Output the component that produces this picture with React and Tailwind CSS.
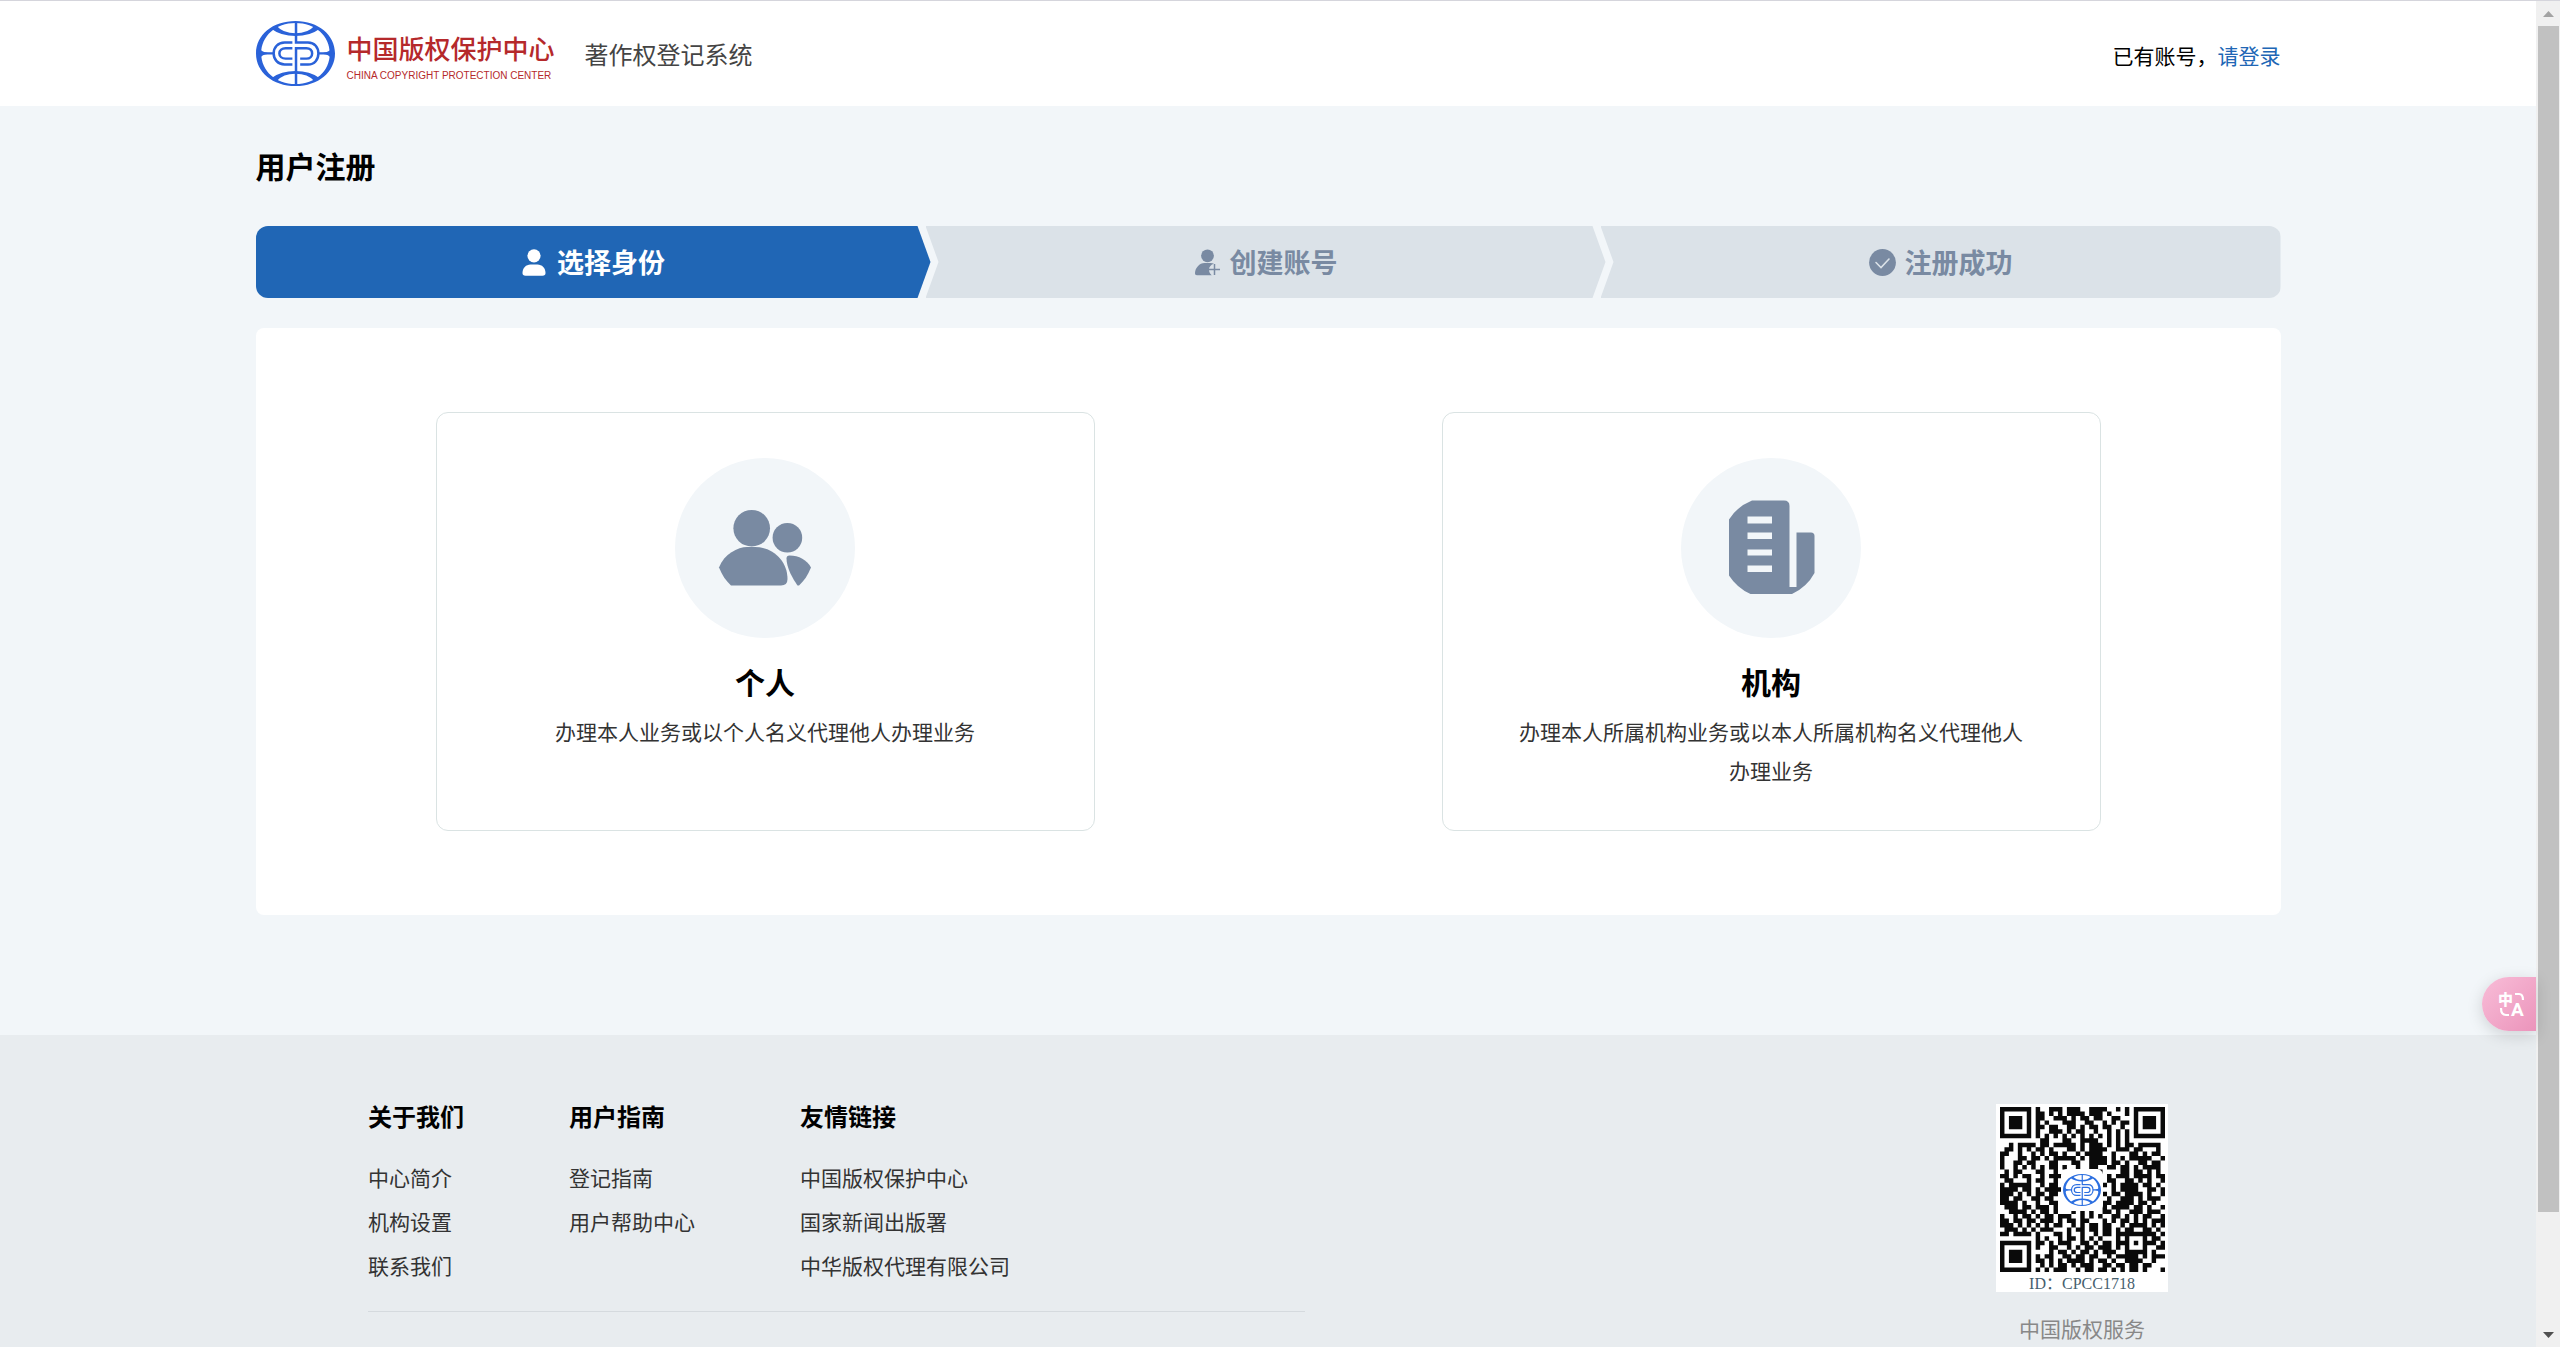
import React from "react";

const QR_ROWS = [
  "#######.#..###.###..####..#.#.#######",
  "#.....#.##.#.#.####.###.#...#.#.....#",
  "#.###.#.##..###.#.##.##..##...#.###.#",
  "#.###.#.#.#...###..##..#.#.##.#.###.#",
  "#.###.#.##.##..##.#.##.##..#..#.###.#",
  "#.....#.#..###.#.##..#..#.#.#.#.....#",
  "#######.#.#.#.#.#.#.#.#.#.#.#.#######",
  ".........##...##..####..#.#.#........",
  "..#.####.##.#####.#.###.#.#.##.#####.",
  ".##.#.#.##.#...##.#.####..###.##...#.",
  "##..#..#.#.##.#..#.####..#...##.#.##.",
  "#...##.##.#.#####.#.####.#.#.#####..#",
  "#..##.##...##...##..####.##.#..##.##.",
  "#..#.#.#.#.##.#..#..##..##.##.#.####.",
  ".#.##...##..#..#......#....##.##.#.#.",
  "##.#.##..#.###..........#.###.####.##",
  ".##...#.##..#...........##..##.#.#..#",
  "#.#####..#.##..........#.#.####.##.#.",
  "####.##.#.####...........#.####..##.#",
  "###.#.#.##.##..........#.##.####.#..#",
  "##.##..##.##............#..###.#.###.",
  "####.#..#..##..........##.####.##.#..",
  ".###.##.###.#..........#.####.##.#..#",
  "..####.#.##.#...#.#.#..##.#..###.###.",
  "#..#.##.#.##.###..#.#.#..##.#.#.##..#",
  "##.##.##.###.#.##.##...#.#.##.#.#.###",
  "###.#.#.#.#.##..#.#.##.##..#.####.#.#",
  ".###.#.#.###...#.##.##.##.#.##..##.#.",
  "##.####.#...##.#..#..#.##.#########.#",
  "........#.#..#.##.#.#.#...#.#...#.##.",
  "#######.##.#.###..##.#.##.###.#.###.#",
  "#.....#.#..##..#.#.##.###.#.#...#..##",
  "#.###.#....#.##.#.##.#.###..#####.#..",
  "#.###.#.#.##..##.##.##..#.#####.#.###",
  "#.###.#.##.#.#.####.#.##.#..####..#..",
  "#.....#..#.#.##.#.###..##.##.##.##...",
  "#######.#.#.###..#.##.##.#.#.##.#...#",
];

const QR_PATH = QR_ROWS.map((row, y) =>
  [...row].map((cell, x) => (cell === "#" ? `M${x} ${y}h1v1h-1z` : "")).join("")
).join("");

function Emblem({ className, color = "#2a62d9" }) {
  return (
    <svg viewBox="0 0 76 65" preserveAspectRatio="none" className={className} fill="none" stroke={color} strokeWidth="2.4" aria-hidden="true">
      <path
        fill={color}
        stroke="none"
        fillRule="evenodd"
        d="M38 0C60 0 76 14 76 32.4S60 65 38 65 0 51 0 32.4 16 0 38 0ZM38 2C19 2 5 15 5 32.4S19 63 38 63 71 50 71 32.4 57 2 38 2Z"
      />
      <path fill={color} stroke="none" d="M15 8Q24 15 38 15T61 8L56 5Q50 12.3 38 12.3T20 5ZM15 57Q24 50 38 50T61 57L56 60Q50 52.7 38 52.7T20 60Z" />
      <path d="M38.5 1V21.5H50C56.5 21.5 60 26.5 60 32.4S56.5 43.5 50 43.5H42.5" />
      <path d="M38.5 64V27.2H48.5C52 27.2 54 29.5 54 32.4S52 37.6 48.5 37.6H42.5" />
      <path d="M35 21.5H27.5C21 21.5 17 26.5 17 32.4S21 43.5 27.5 43.5H35" />
      <path d="M35 27.2H28.5C25 27.2 22.5 29.5 22.5 32.4S25 37.6 28.5 37.6H35" />
      <path d="M3 32.4H17M60 32.4H73" />
      <path fill={color} stroke="none" d="M4 28Q6 31.3 11 31.8V33Q6 33.5 4 37ZM72 28Q70 31.3 65 31.8V33Q70 33.5 72 37Z" />
    </svg>
  );
}

function UserIcon() {
  return (
    <svg viewBox="0 0 27 27" className="size-[27px]" fill="currentColor" aria-hidden="true">
      <circle cx="13" cy="6.8" r="6.6" />
      <path d="M1.5 24C1.5 19 5 15.5 9.5 15.5h7c4.500 0 8 3.500 8 8.500 0 2-1 2.700-3 2.700H4.500c-2 0-3-.7-3-2.700Z" />
    </svg>
  );
}

function UserAddIcon() {
  return (
    <svg viewBox="0 0 27 27" className="size-[27px]" fill="currentColor" aria-hidden="true">
      <circle cx="13.5" cy="6.8" r="6.4" />
      <path d="M1 24C1 19 5.5 14 10.5 14h6c1.300 0 2.500.3 3.500.8-3 .8-5 3-5 5.700 0 2.400 1 4.300 2.700 5.700H3C1.600 26.200 1 25.500 1 24Z" />
      <path d="M20.5 15v11M15 20.5h11" stroke="currentColor" strokeWidth="1.5" />
    </svg>
  );
}

function CheckIcon() {
  return (
    <svg viewBox="0 0 27 27" className="size-[27px]" aria-hidden="true">
      <circle cx="13.5" cy="13.5" r="13.4" fill="currentColor" />
      <path d="m7 13.5 5 5 8-8.5" fill="none" stroke="#dbe2e8" strokeWidth="1.6" strokeLinecap="round" />
    </svg>
  );
}

function PeopleIcon() {
  return (
    <svg viewBox="0 0 96 96" className="size-24" fill="currentColor" aria-hidden="true">
      <circle cx="34.7" cy="28.2" r="18.3" />
      <circle cx="70.4" cy="37.8" r="14.8" />
      <path d="M2 67.5C7 54 21 47 30 47H38C56 47 70.5 61 70.5 79Q70.5 85.5 64 85.5H14C9 81 5 75 2 67.5Z" />
      <path d="M72.5 55.5C82 55.5 90 60 94 67.5C91 75 87 81 82 85.5H80.5C76 79 69.5 68 69.5 58.5Q69.5 55.5 72.5 55.5Z" />
    </svg>
  );
}

function BuildingIcon() {
  return (
    <svg viewBox="0 0 96 96" className="size-24" fill="currentColor" aria-hidden="true">
      <path
        fillRule="evenodd"
        d="M29 .5H61Q66.5 .5 66.5 6V87H73.5V32.5H88Q91.5 32.5 91.5 36V73Q84 87 69 94H27.5Q14 88 6 75.5V19.5Q14 6.5 29 .5ZM24.5 16.5V23.5H49V16.5ZM24.5 32.5V39H49V32.5ZM24.5 49.5V55.5H49V49.5ZM24.5 65.5V72H49V65.5Z"
      />
    </svg>
  );
}

const STEPS = [
  {
    label: "选择身份",
    Icon: UserIcon,
    look: "bg-[#2066b5] text-white rounded-l-xl [clip-path:polygon(0_0,calc(100%-13px)_0,100%_50%,calc(100%-13px)_100%,0_100%)]",
  },
  {
    label: "创建账号",
    Icon: UserAddIcon,
    look: "-ml-[5px] bg-[#dbe2e8] text-[#798aa2] [clip-path:polygon(0_0,calc(100%-13px)_0,100%_50%,calc(100%-13px)_100%,0_100%,13px_50%)]",
  },
  {
    label: "注册成功",
    Icon: CheckIcon,
    look: "-ml-[5px] bg-[#dbe2e8] text-[#798aa2] rounded-r-xl [clip-path:polygon(0_0,100%_0,100%_100%,0_100%,13px_50%)]",
  },
];

const ROLES = [
  { title: "个人", text: "办理本人业务或以个人名义代理他人办理业务", Icon: PeopleIcon },
  { title: "机构", text: "办理本人所属机构业务或以本人所属机构名义代理他人办理业务", Icon: BuildingIcon },
];

const LINKS = [
  { title: "关于我们", items: ["中心简介", "机构设置", "联系我们"] },
  { title: "用户指南", items: ["登记指南", "用户帮助中心"] },
  { title: "友情链接", items: ["中国版权保护中心", "国家新闻出版署", "中华版权代理有限公司"] },
];

function Header() {
  return (
    <header className="border-t border-[#d5d5dc] bg-white">
      <div className="mx-auto flex h-[105px] w-full max-w-[2025px] items-center">
        <Emblem className="h-[65px] w-[79px]" />
        <div className="ml-3 flex flex-col pt-1.5 text-[#b5292b]">
          <span className="text-[26px] font-medium leading-8">中国版权保护中心</span>
          <span className="mt-1.5 font-['Liberation_Sans',sans-serif] text-[10px] leading-3">CHINA COPYRIGHT PROTECTION CENTER</span>
        </div>
        <span className="ml-[30px] text-2xl text-[#444]">著作权登记系统</span>
        <p className="ml-auto pt-1 text-[21px]">
          已有账号，<a href="#login" className="text-[#2066b5]">请登录</a>
        </p>
      </div>
    </header>
  );
}

function Footer() {
  return (
    <footer className="mt-[120px] flex-1 bg-[#e8ecef]">
      <div className="mx-auto flex w-full max-w-[1800px] items-start justify-between pt-16">
        <div className="w-[937px] border-b border-[#d5dade] pb-6">
          <nav className="flex gap-[105px]">
            {LINKS.map((group) => (
              <section key={group.title}>
                <h3 className="text-2xl font-bold leading-[34px]">{group.title}</h3>
                <ul className="mt-[22px] text-[21px] leading-[44px] text-[#333]">
                  {group.items.map((item) => (
                    <li key={item}>
                      <a href="#link">{item}</a>
                    </li>
                  ))}
                </ul>
              </section>
            ))}
          </nav>
        </div>
        <figure className="mt-[5px] flex flex-col items-center">
          <div className="flex h-[188px] w-[172px] flex-col items-center bg-white pt-[3px]">
            <div className="relative">
              <svg viewBox="0 0 37 37" className="size-[165px]" role="img" aria-label="二维码">
                <path d={QR_PATH} fill="#0a0a0a" />
              </svg>
              <div className="absolute inset-0 flex items-center justify-center">
                <div className="flex size-[42px] items-center justify-center rounded-md bg-white">
                  <Emblem className="h-8 w-[38px]" color="#2c6fe0" />
                </div>
              </div>
            </div>
            <span className="font-['Liberation_Serif','Noto_Sans_CJK_SC',serif] text-base leading-6 text-[#46606e]">ID：CPCC1718</span>
          </div>
          <figcaption className="mt-5 text-[21px] leading-8 text-[#888]">中国版权服务</figcaption>
        </figure>
      </div>
    </footer>
  );
}

function Scrollbar() {
  return (
    <div className="flex w-6 shrink-0 flex-col items-center border-t border-[#d5d5dc] bg-[#f0f0f0]" aria-hidden="true">
      <svg viewBox="0 0 24 25" className="h-[25px] w-6 shrink-0">
        <path d="M12.5 10 18 16H7Z" fill="#a3a3a3" />
      </svg>
      <div className="ml-px h-[88.1%] w-[21px] bg-[#c1c1c1]" />
      <svg viewBox="0 0 24 25" className="mt-auto h-[25px] w-6 shrink-0">
        <path d="M7 10H18L12.5 16Z" fill="#505050" />
      </svg>
    </div>
  );
}

function TranslateButton() {
  return (
    <button
      type="button"
      aria-label="翻译"
      className="absolute right-6 top-[977px] flex h-[54px] w-[54px] items-center justify-center rounded-l-full bg-linear-to-br from-[#f8bdd8] to-[#eb94bb] pl-1.5 shadow-[0_4px_16px_rgba(0,0,0,0.15)]"
    >
      <svg viewBox="-9 -9 46 46" className="size-[46px] shrink-0 overflow-visible" fill="none" stroke="white" strokeWidth="2.2">
        <text x="0" y="15" fontSize="15" fontWeight="900" fill="white" stroke="none">中</text>
        <text x="13" y="26" fontSize="19" fontWeight="700" fill="white" stroke="none" fontFamily="Roboto, sans-serif">A</text>
        <path d="M17 4h4q4 0 4 6M3 18q0 7 5 7h3" />
      </svg>
    </button>
  );
}

export default function App() {
  return (
    <div className="relative flex h-screen overflow-hidden bg-[#f2f6f9] font-['Noto_Sans_CJK_SC',sans-serif] text-black">
      <div className="flex min-w-0 flex-1 flex-col overflow-hidden">
        <Header />
        <main className="mx-auto w-full max-w-[2025px]">
          <h1 className="mb-[38px] mt-[37px] text-3xl font-bold leading-[45px]">用户注册</h1>
          <ol className="grid grid-cols-3">
            {STEPS.map(({ label, Icon, look }) => (
              <li key={label} className={`flex h-[72px] items-center justify-center gap-[9px] pt-px text-[27px] font-bold ${look}`}>
                <Icon />
                <span>{label}</span>
              </li>
            ))}
          </ol>
          <div className="mt-[30px] grid grid-cols-2 gap-[347px] rounded-lg bg-white px-[180px] py-[84px]">
            {ROLES.map(({ title, text, Icon }) => (
              <button
                key={title}
                type="button"
                className="flex flex-col items-center rounded-xl border border-[#dae3e3] px-[72px] pb-10 pt-[45px]"
              >
                <span className="flex size-[180px] items-center justify-center rounded-full bg-[#f2f6f9] text-[#798aa2]">
                  <Icon />
                </span>
                <span className="mt-[21px] text-3xl font-bold leading-[45px]">{title}</span>
                <span className="mt-2 text-[21px] leading-[39px] text-[#333]">{text}</span>
              </button>
            ))}
          </div>
        </main>
        <Footer />
      </div>
      <Scrollbar />
      <TranslateButton />
    </div>
  );
}
